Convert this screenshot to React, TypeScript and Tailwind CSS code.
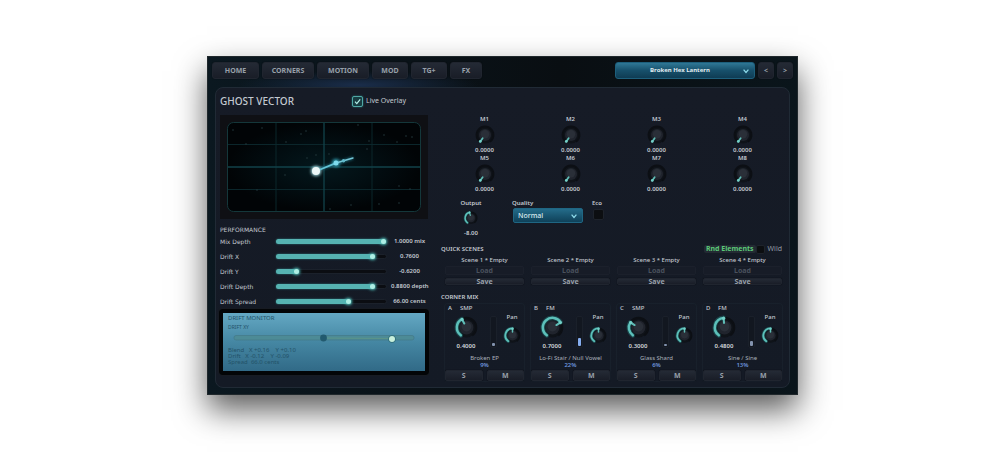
import { useState } from 'react';
import type { ReactNode } from 'react';

const tabs = [
  { name: 'HOME', width: 'w-[47px]' },
  { name: 'CORNERS', width: 'w-[52px]' },
  { name: 'MOTION', width: 'w-[52px]' },
  { name: 'MOD', width: 'w-9' },
  { name: 'TG+', width: 'w-9' },
  { name: 'FX', width: 'w-8' },
];

const performance = [
  { name: 'Mix Depth', value: 1, text: '1.0000 mix' },
  { name: 'Drift X', value: 0.9, text: '0.7600' },
  { name: 'Drift Y', value: 0.21, text: '-0.6200' },
  { name: 'Drift Depth', value: 0.9, text: '0.8800 depth' },
  { name: 'Drift Spread', value: 0.68, text: '66.00 cents' },
];

const macros = ['M1', 'M2', 'M3', 'M4', 'M5', 'M6', 'M7', 'M8'];
const scenes = [1, 2, 3, 4];

const corners = [
  { id: 'A', engine: 'SMP', level: 0.4, text: '0.4000', name: 'Broken EP', share: 9 },
  { id: 'B', engine: 'FM', level: 0.7, text: '0.7000', name: 'Lo-Fi Stair / Null Vowel', share: 22 },
  { id: 'C', engine: 'SMP', level: 0.3, text: '0.3000', name: 'Glass Shard', share: 6 },
  { id: 'D', engine: 'FM', level: 0.48, text: '0.4800', name: 'Sine / Sine', share: 13 },
];

const stars = [
  [6, 8], [35, 6], [74, 12], [79, 9], [59, 20], [19, 22], [89, 33], [80, 36], [131, 3], [157, 13],
  [179, 14], [185, 15], [170, 20], [140, 27], [58, 53], [30, 68], [103, 87], [124, 83], [152, 82],
  [172, 64], [183, 67], [172, 81], [102, 32], [142, 19],
];

const raised =
  'border border-[#20252f] bg-linear-to-b from-[#242a35] to-[#191d27] text-[#98a0aa] shadow-[0_0_1px_#05080c]';

function point(angle: number, radius: number) {
  const a = (angle * Math.PI) / 180;
  return [50 + radius * Math.sin(a), 50 - radius * Math.cos(a)];
}

function Knob({ label, value, size, arc = true }: { label: string; value: number; size: string; arc?: boolean }) {
  const [v, setV] = useState(value);
  const end = -144 + v * 288;
  const [sx, sy] = point(-144, 42);
  const [ex, ey] = point(end, 42);
  const [tx, ty] = point(144, 42);
  const [px, py] = point(end, 20);
  const [qx, qy] = point(end, 40);
  return (
    <span className={`relative block ${size}`}>
      <svg viewBox="0 0 100 100" className="block size-full overflow-visible">
        <circle cx="50" cy="50" r="43" fill="#0f1319" />
        <path d={`M${sx} ${sy}A42 42 0 1 1 ${tx} ${ty}`} fill="none" stroke="#0c0f14" strokeWidth="10" />
        <circle cx="50" cy="50" r="30" fill="#20242d" />
        <circle cx="50" cy="46" r="21" fill="#2a2f38" />
        {arc && v > 0 && (
          <>
            <path
              d={`M${sx} ${sy}A42 42 0 ${v > 0.625 ? 1 : 0} 1 ${ex} ${ey}`}
              fill="none"
              stroke="#2c8f8c"
              strokeOpacity="0.35"
              strokeWidth="20"
              strokeLinecap="round"
            />
            <path
              d={`M${sx} ${sy}A42 42 0 ${v > 0.625 ? 1 : 0} 1 ${ex} ${ey}`}
              fill="none"
              stroke="#5cc0ba"
              strokeWidth="11"
              strokeLinecap="round"
            />
          </>
        )}
        <path d={`M${px} ${py}L${qx} ${qy}`} stroke="#5fbdb6" strokeWidth="9" strokeLinecap="round" />
        <circle cx={qx} cy={qy} r="7" fill="#74d0c8" />
      </svg>
      <input
        type="range"
        aria-label={label}
        min={0}
        max={1}
        step={0.01}
        value={v}
        onChange={(e) => setV(Number(e.target.value))}
        className="absolute inset-0 size-full cursor-pointer opacity-0"
      />
    </span>
  );
}

function Fader({ name, value, text }: { name: string; value: number; text: string }) {
  const [v, setV] = useState(value);
  return (
    <label className="flex h-[15px] items-center">
      <span className="w-[55px] shrink-0 font-['DejaVu_Sans',sans-serif]">{name}</span>
      <span className="relative flex h-2 flex-1 items-center">
        <span className="flex h-[5px] w-full rounded-full border border-[#1b212b] bg-[#0b0d12]">
          <span
            className="relative -my-px block rounded-full bg-[#56b3b2] shadow-[0_0_2px_#2f7f80]"
            style={{ width: `${v * 100}%` }}
          >
            <span className="absolute top-0 right-0 size-[5px] rounded-full bg-[#aeeee4] shadow-[0_0_3px_1px_#4fb9b4]" />
          </span>
        </span>
        <input
          type="range"
          min={0}
          max={1}
          step={0.01}
          value={v}
          onChange={(e) => setV(Number(e.target.value))}
          className="absolute inset-0 w-full cursor-pointer opacity-0"
        />
      </span>
      <span className="w-[41px] shrink-0 pl-1 text-center font-semibold whitespace-nowrap">{text}</span>
    </label>
  );
}

function Tick({ label, checked = false, children, size }: { label: string; checked?: boolean; children?: ReactNode; size: string }) {
  const [on, setOn] = useState(checked);
  return (
    <span className={`relative block shrink-0 ${size}`}>
      <input
        id={label}
        type="checkbox"
        checked={on}
        onChange={(e) => setOn(e.target.checked)}
        className="block size-full appearance-none rounded-[2px] border border-[#1e232b] bg-[#0c0e11] checked:border-[#4fa8a5] checked:bg-[#173c41] checked:shadow-[0_0_2px_#2c7a7a]"
      />
      {on && children}
    </span>
  );
}

function Chevron({ className }: { className: string }) {
  return (
    <svg viewBox="0 0 10 10" className={`pointer-events-none absolute size-2 ${className}`}>
      <path d="M2 3.2L5 6.8L8 3.2" fill="none" stroke="#8fdcec" strokeWidth="1.5" />
    </svg>
  );
}

function Scope() {
  return (
    <div className="bg-[#0f1014] p-[7px]">
      <svg viewBox="0 0 194 90" className="block w-full">
        <defs>
          <radialGradient id="scope">
            <stop offset="0" stopColor="#04181d" />
            <stop offset="0.55" stopColor="#020d11" />
            <stop offset="1" stopColor="#010406" />
          </radialGradient>
          <filter id="glow" x="-100%" y="-100%" width="300%" height="300%">
            <feGaussianBlur stdDeviation="1.4" />
          </filter>
        </defs>
        <rect x="0.5" y="0.5" width="193" height="89" rx="6" fill="url(#scope)" stroke="#14373a" />
        <path d="M49 1V89M145 1V89M1 22.5H193M1 67.5H193" stroke="#0b262b" strokeWidth="1" />
        <path d="M97 1V89M1 45H193" stroke="#12424a" strokeWidth="1.3" />
        {stars.map(([x, y]) => (
          <circle key={`${x}-${y}`} cx={x} cy={y} r="0.8" fill="#24373c" />
        ))}
        <g filter="url(#glow)">
          <circle cx="89" cy="49" r="5" fill="#a9dfe6" />
          <circle cx="109" cy="41" r="4" fill="#2f9db0" />
          <path d="M93 47L126 36" stroke="#23788a" strokeWidth="2" />
        </g>
        <path d="M92 48L110 40.6" stroke="#62c3d6" strokeWidth="1.8" />
        <path d="M109 41L126 36" stroke="#74c6d6" strokeWidth="1.4" strokeLinecap="round" />
        <circle cx="109" cy="41" r="2.5" fill="#7edbee" />
        <circle cx="116.5" cy="38.7" r="1.7" fill="#5fb9cb" />
        <circle cx="89" cy="49" r="4" fill="#edf7f7" />
      </svg>
    </div>
  );
}

function Monitor() {
  return (
    <section className="-mx-px rounded-[3px] border-4 border-[#030507] text-[#235268] outline outline-[#171b22]">
      <div className="bg-linear-to-b from-[#64a8c3] via-[#4587a3] to-[#316a87] px-[5px] pt-px pb-1.5">
        <h2 className="h-[9px] leading-[9px]">DRIFT MONITOR</h2>
        <p className="h-2 text-[5px] leading-2">DRIFT XY</p>
        <svg viewBox="0 0 192 12" className="mt-px block w-full">
          <rect x="6" y="3.5" width="180" height="4.5" rx="2" fill="#4d8b96" stroke="#437a88" strokeWidth="0.7" />
          <path d="M95.5 6L164 6.5" stroke="#5c9589" strokeWidth="1" />
          <circle cx="95.5" cy="6" r="3.4" fill="#225a6e" />
          <circle cx="164" cy="7" r="3.8" fill="#2d6c78" />
          <circle cx="164" cy="7" r="3" fill="#c9f0dc" />
        </svg>
        <pre className="mt-[3px] font-['Noto_Sans',sans-serif] leading-[6px]">
          {'Blend   X +0.16    Y +0.10\nDrift   X -0.12    Y -0.09\nSpread  66.0 cents'}
        </pre>
      </div>
    </section>
  );
}

function Corner({ id, engine, level, text, name, share }: (typeof corners)[number]) {
  return (
    <article className="rounded-[3px] shadow-[0_0_0_1px_#18202b]">
      <div className="flex h-[50px] justify-between">
        <div className="w-[42px]">
          <h3 className="flex h-[9px] gap-2 pl-[3px] leading-[9px] font-medium">
            <span className="w-1">{id}</span>
            <span>{engine}</span>
          </h3>
          <div className="mt-[3px] flex justify-center">
            <Knob label={`${id} level`} value={level} size="size-[23px]" />
          </div>
          <p className="mt-[3px] text-center leading-2 font-semibold text-[#d3d8dd]">{text}</p>
        </div>
        <div className="mt-3 flex h-8 w-[7px] items-end rounded-[2px] border border-[#1a202a] bg-[#121720] p-px">
          <div
            className={`w-full rounded-[1px] ${share > 20 ? 'bg-[#86aef0]' : 'bg-[#8292ad]'}`}
            style={{ height: `${Math.max(2, Math.round(share * 0.36))}px` }}
          />
        </div>
        <div className="flex w-6 flex-col items-center pt-[9px]">
          <p className="leading-2 font-medium">Pan</p>
          <div className="mt-1.5">
            <Knob label={`${id} pan`} value={0.5} size="size-[17px]" />
          </div>
        </div>
      </div>
      <p className="text-center leading-2 whitespace-nowrap text-[#aab1ba]">{name}</p>
      <p className="text-center leading-[7px] font-semibold text-[#6c95dc]">{share}%</p>
      <div className="mt-px grid grid-cols-2 gap-1">
        {['S', 'M'].map((b) => (
          <button key={b} type="button" className={`h-[11px] rounded-[2px] text-[7px] leading-[9px] font-bold ${raised}`}>
            {b}
          </button>
        ))}
      </div>
    </article>
  );
}

export default function App() {
  return (
    <div className="min-h-screen bg-white px-4 pt-14 pb-14 font-['Noto_Sans',sans-serif] text-[6px] text-[#c3c9d0]">
      <main className="mx-auto max-w-[591px] border border-[#20282c] bg-[#091117] bg-[radial-gradient(ellipse_120px_14px_at_150px_28px,#1a2d4a,transparent),linear-gradient(90deg,#0b1820,#090e12_60%,#0a151b)] pt-[5px] pb-1.5 shadow-[0_15px_30px_rgba(0,0,0,0.64)]">
        <header className="flex items-center justify-between px-1">
          <nav className="flex gap-[3px]">
            {tabs.map((t) => (
              <button
                key={t.name}
                type="button"
                className={`h-[17px] rounded-[3px] text-[7px] leading-[15px] font-bold ${t.width} ${raised}`}
              >
                {t.name}
              </button>
            ))}
          </nav>
          <div className="flex gap-[3px]">
            <div className="relative">
              <select
                aria-label="Preset"
                className="block h-[17px] w-[140px] appearance-none rounded-[3px] border border-[#1d5f7c] bg-linear-to-b from-[#2f7896] via-[#17506b] to-[#0f3c54] pr-2.5 text-center text-[6px] leading-[15px] font-bold text-[#e3eef2] [text-align-last:center]"
              >
                <option>Broken Hex Lantern</option>
              </select>
              <Chevron className="top-[5px] right-[5px]" />
            </div>
            {['<', '>'].map((s) => (
              <button
                key={s}
                type="button"
                aria-label={s === '<' ? 'Previous preset' : 'Next preset'}
                className={`h-[17px] w-4 rounded-[3px] text-[7px] leading-[15px] font-bold ${raised}`}
              >
                {s}
              </button>
            ))}
          </div>
        </header>

        <div className="mx-[7px] mt-2 flex gap-[13px] rounded-lg border border-[#202a35] bg-linear-to-b from-[#161b26] to-[#141a25] pt-[5px] pr-[3px] pb-1.5 pl-1">
          <div className="w-[208px] shrink-0">
            <div className="flex h-4 items-center">
              <h1 className="w-[132px] text-[10px] leading-4 font-medium">GHOST VECTOR</h1>
              <Tick label="Live Overlay" checked size="size-[11px]">
                <svg viewBox="0 0 11 11" className="pointer-events-none absolute inset-0 size-full">
                  <path d="M3 5.6L4.8 7.6L8.2 3.4" fill="none" stroke="#b5f3ea" strokeWidth="1.2" />
                </svg>
              </Tick>
              <label htmlFor="Live Overlay" className="pl-[3px] text-[7px]">
                Live Overlay
              </label>
            </div>
            <div className="mt-1.5">
              <Scope />
            </div>
            <h2 className="mt-1.5 h-[9px] font-['DejaVu_Sans',sans-serif] leading-[9px]">PERFORMANCE</h2>
            <div>
              {performance.map((p) => (
                <Fader key={p.name} {...p} />
              ))}
            </div>
            <Monitor />
          </div>

          <div className="min-w-0 flex-1 pt-[22px]">
            <div className="grid grid-cols-4 gap-x-[7px] px-1">
              {macros.map((m) => (
                <div key={m} className="flex flex-col items-center leading-2 font-semibold">
                  <span>{m}</span>
                  <span className="flex h-[23px] items-center">
                    <Knob label={m} value={0} size="size-5" arc={false} />
                  </span>
                  <span>0.0000</span>
                </div>
              ))}
            </div>

            <div className="mt-1.5 flex h-[38px] px-1 leading-2 font-semibold">
              <div className="flex w-[52px] flex-col items-center">
                <span>Output</span>
                <span className="flex h-[22px] items-center">
                  <Knob label="Output" value={0.45} size="size-[14px]" />
                </span>
                <span>-8.00</span>
              </div>
              <div className="ml-[15px] w-[71px]">
                <label htmlFor="quality" className="block">
                  Quality
                </label>
                <div className="relative mt-px ml-px">
                  <select
                    id="quality"
                    className="block h-[15px] w-full appearance-none rounded-[2px] border border-[#1f6683] bg-linear-to-b from-[#246c8a] to-[#0f4159] pl-1 text-[7px] leading-[13px] font-medium text-[#dcebf0]"
                  >
                    <option>Normal</option>
                  </select>
                  <Chevron className="top-1 right-[5px]" />
                </div>
              </div>
              <div className="ml-[9px]">
                <label htmlFor="Eco" className="block">
                  Eco
                </label>
                <div className="mt-0.5 pl-px">
                  <Tick label="Eco" size="size-[11px]" />
                </div>
              </div>
            </div>

            <div className="mt-[7px] flex h-2.5 items-center justify-between pr-1">
              <h2 className="font-semibold">QUICK SCENES</h2>
              <div className="flex items-center">
                <button
                  type="button"
                  className="h-2 rounded-[2px] bg-[#232a33] px-0.5 text-[7px] leading-2 font-bold text-[#5bc878]"
                >
                  Rnd Elements
                </button>
                <Tick label="Wild" size="size-[9px]" />
                <label htmlFor="Wild" className="pl-[3px] text-[7px] leading-2 text-[#929aa5]">
                  Wild
                </label>
              </div>
            </div>
            <div className="mt-0.5 grid grid-cols-4 gap-x-[7px] px-1">
              {scenes.map((n) => (
                <div key={n}>
                  <p className="text-center leading-2 font-medium">Scene {n} * Empty</p>
                  <button
                    type="button"
                    disabled
                    className="mt-0.5 block h-[9px] w-full rounded-[2px] border border-[#1b202b] bg-[#171c27] text-[7px] leading-[7px] font-bold text-[#4a515d]"
                  >
                    Load
                  </button>
                  <button
                    type="button"
                    className={`mt-[3px] block h-[7px] w-full rounded-[2px] text-[7px] leading-[5px] font-bold ${raised}`}
                  >
                    Save
                  </button>
                </div>
              ))}
            </div>

            <h2 className="mt-[7px] h-2.5 leading-2.5 font-semibold">CORNER MIX</h2>
            <div className="mt-0.5 grid grid-cols-4 gap-x-[7px] px-1">
              {corners.map((c) => (
                <Corner key={c.id} {...c} />
              ))}
            </div>
          </div>
        </div>
      </main>
    </div>
  );
}
